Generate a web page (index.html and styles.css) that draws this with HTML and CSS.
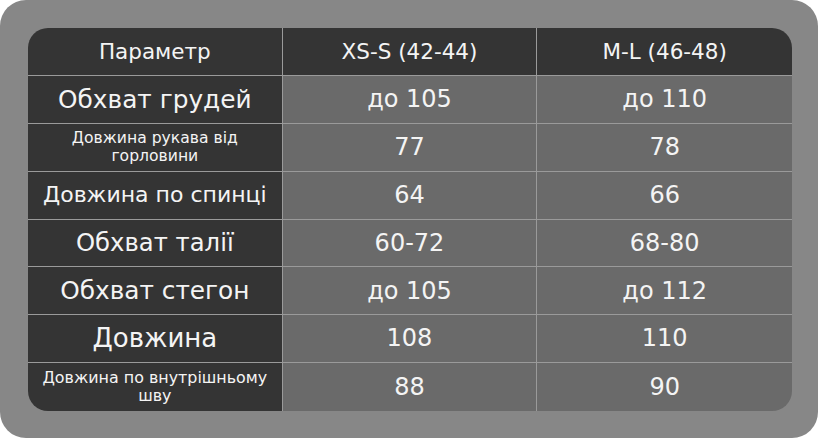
FILE: index.html
```html
<!DOCTYPE html>
<html lang="uk">
<head>
<meta charset="utf-8">
<title>Таблиця розмірів</title>
<link rel="stylesheet" href="styles.css">
</head>
<body>
<div class="panel">
  <div class="table">
    <div class="cell head">Параметр</div>
    <div class="cell head">XS-S (42-44)</div>
    <div class="cell head">M-L (46-48)</div>

    <div class="cell name s25">Обхват грудей</div>
    <div class="cell val">до 105</div>
    <div class="cell val">до 110</div>

    <div class="cell name sm">Довжина рукава від<br>горловини</div>
    <div class="cell val">77</div>
    <div class="cell val">78</div>

    <div class="cell name s22">Довжина по спинці</div>
    <div class="cell val">64</div>
    <div class="cell val">66</div>

    <div class="cell name s24">Обхват талії</div>
    <div class="cell val">60-72</div>
    <div class="cell val">68-80</div>

    <div class="cell name s25">Обхват стегон</div>
    <div class="cell val">до 105</div>
    <div class="cell val">до 112</div>

    <div class="cell name s26">Довжина</div>
    <div class="cell val">108</div>
    <div class="cell val">110</div>

    <div class="cell name sm wide last">Довжина по внутрішньому<br>шву</div>
    <div class="cell val last">88</div>
    <div class="cell val last">90</div>
  </div>
</div>
</body>
</html>
```
FILE: styles.css
```css
html, body {
  margin: 0;
  padding: 0;
  background: #ffffff;
}
body {
  font-family: "DejaVu Sans", sans-serif;
  color: #f4f4f4;
}
.panel {
  width: 818px;
  height: 438px;
  box-sizing: border-box;
  padding: 28px 26px 27px 28px;
  background: #878787;
  border-radius: 26px;
}
.table {
  display: grid;
  grid-template-columns: repeat(3, 1fr);
  grid-template-rows: repeat(8, 1fr);
  height: 100%;
  border-radius: 20px;
  overflow: hidden;
}
.cell {
  display: flex;
  align-items: center;
  justify-content: center;
  text-align: center;
  background: #6a6a6a;
  font-size: 24px;
  line-height: 1.1;
  border-right: 1px solid rgba(255, 255, 255, 0.16);
  border-bottom: 1px solid rgba(255, 255, 255, 0.16);
  background-clip: padding-box;
}
.cell:nth-child(3n) {
  border-right: none;
}
.cell.last {
  border-bottom: none;
}
.cell.head {
  background-color: #343434;
  font-size: 21.5px;
}
.cell.name {
  background-color: #343434;
}
.name.s26 { font-size: 26px; }
.name.s25 { font-size: 24.8px; }
.name.s24 { font-size: 24.3px; }
.name.s22 { font-size: 22px; }
.name.sm { font-size: 15.6px; line-height: 18px; }
.name.sm.wide { font-size: 15.9px; }
```
